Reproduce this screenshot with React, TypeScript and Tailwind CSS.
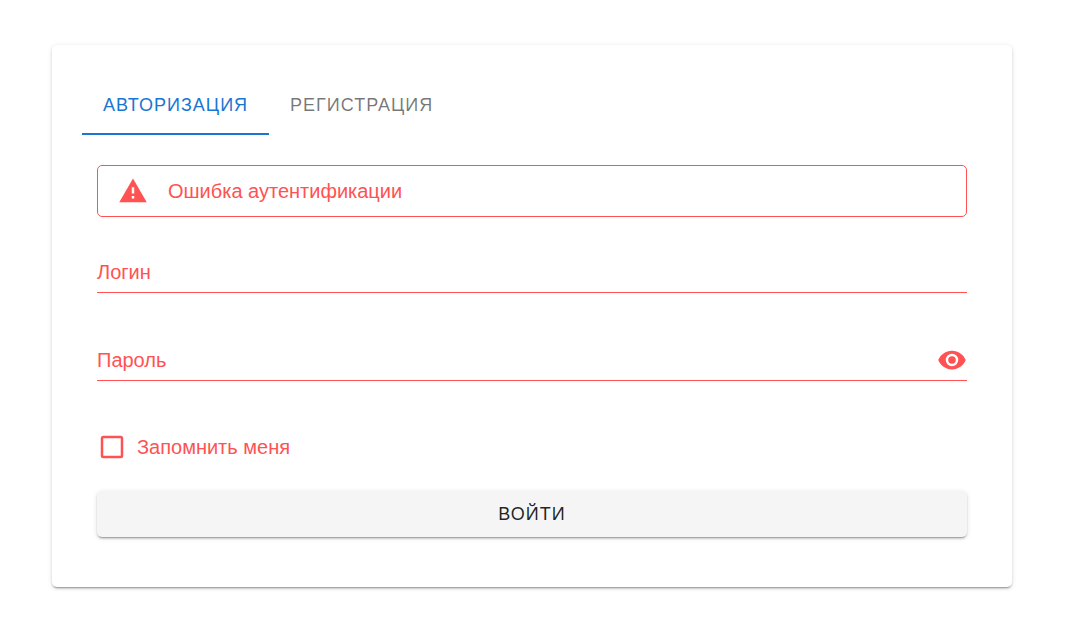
import { useState } from "react";
import type { FormEvent } from "react";

const icons = {
  alert: "M13 14H11V9H13M13 18H11V16H13M1 21H23L12 2L1 21Z",
  eye: "M12,9A3,3 0 0,0 9,12A3,3 0 0,0 12,15A3,3 0 0,0 15,12A3,3 0 0,0 12,9M12,17A5,5 0 0,1 7,12A5,5 0 0,1 12,7A5,5 0 0,1 17,12A5,5 0 0,1 12,17M12,4.5C7,4.5 2.73,7.61 1,12C2.73,16.39 7,19.5 12,19.5C17,19.5 21.27,16.39 23,12C21.27,7.61 17,4.5 12,4.5Z",
  box: "M19,3H5C3.89,3 3,3.89 3,5V19A2,2 0 0,0 5,21H19A2,2 0 0,0 21,19V5C21,3.89 20.1,3 19,3M19,5V19H5V5H19Z",
  boxChecked:
    "M10,17L5,12L6.41,10.58L10,14.17L17.59,6.58L19,8M19,3H5C3.89,3 3,3.89 3,5V19A2,2 0 0,0 5,21H19A2,2 0 0,0 21,19V5C21,3.89 20.1,3 19,3Z",
};

function Icon({ name }: { name: keyof typeof icons }) {
  return (
    <svg viewBox="0 0 24 24" className="size-[30px] shrink-0" fill="currentColor" aria-hidden="true">
      <path d={icons[name]} />
    </svg>
  );
}

const tabs = ["Авторизация", "Регистрация"];
const raised =
  "shadow-[0_3px_1px_-2px_rgba(0,0,0,0.2),0_2px_2px_0_rgba(0,0,0,0.14),0_1px_5px_0_rgba(0,0,0,0.12)]";

export default function App() {
  const [active, setActive] = useState(0);
  const [visible, setVisible] = useState(false);
  const [remember, setRemember] = useState(false);

  return (
    <main className="py-[45px] pr-[18px] font-['Liberation_Sans',Arial,sans-serif] text-xl leading-6 text-[#ff5252]">
      <section className={`mx-auto w-full max-w-[960px] rounded-[5px] bg-white px-[30px] pt-[30px] pb-[50px] ${raised}`}>
        <div role="tablist" className="flex">
          {tabs.map((tab, i) => (
            <button
              key={tab}
              type="button"
              role="tab"
              aria-selected={active === i}
              onClick={() => setActive(i)}
              className={`h-[60px] border-y-2 border-t-transparent px-[21px] text-lg tracking-[1px] uppercase ${
                active === i ? "border-b-[#1976d2] text-[#1976d2]" : "border-b-transparent text-black/54"
              }`}
            >
              {tab}
            </button>
          ))}
        </div>

        <form className="flex flex-col px-[15px] pt-[30px]" onSubmit={(e: FormEvent) => e.preventDefault()}>
          <div role="alert" className="flex h-[52px] items-center gap-5 rounded-[5px] border border-[#ff5252] px-5">
            <Icon name="alert" />
            <span>Ошибка аутентификации</span>
          </div>

          <div className="mt-[35px] flex h-[41px] items-center gap-3 border-b border-[#ff5252]">
            <label htmlFor="login">Логин</label>
            <input id="login" type="text" className="min-w-0 flex-1 bg-transparent outline-none" />
          </div>

          <div className="mt-[47px] flex h-[41px] items-center gap-3 border-b border-[#ff5252]">
            <label htmlFor="password">Пароль</label>
            <input
              id="password"
              type={visible ? "text" : "password"}
              className="min-w-0 flex-1 bg-transparent outline-none"
            />
            <button type="button" aria-label="Показать пароль" onClick={() => setVisible(!visible)}>
              <Icon name="eye" />
            </button>
          </div>

          <div className="mt-[51px] flex items-center gap-[10px]">
            <div className="grid size-[30px]">
              <input
                id="remember"
                type="checkbox"
                checked={remember}
                onChange={(e) => setRemember(e.target.checked)}
                className="col-start-1 row-start-1 size-[30px] appearance-none"
              />
              <span className="pointer-events-none col-start-1 row-start-1">
                <Icon name={remember ? "boxChecked" : "box"} />
              </span>
            </div>
            <label htmlFor="remember">Запомнить меня</label>
          </div>

          <button
            type="submit"
            className={`mt-[29px] h-[46px] rounded-[5px] bg-[#f5f5f5] text-lg tracking-[1px] text-black/87 uppercase ${raised}`}
          >
            Войти
          </button>
        </form>
      </section>
    </main>
  );
}
